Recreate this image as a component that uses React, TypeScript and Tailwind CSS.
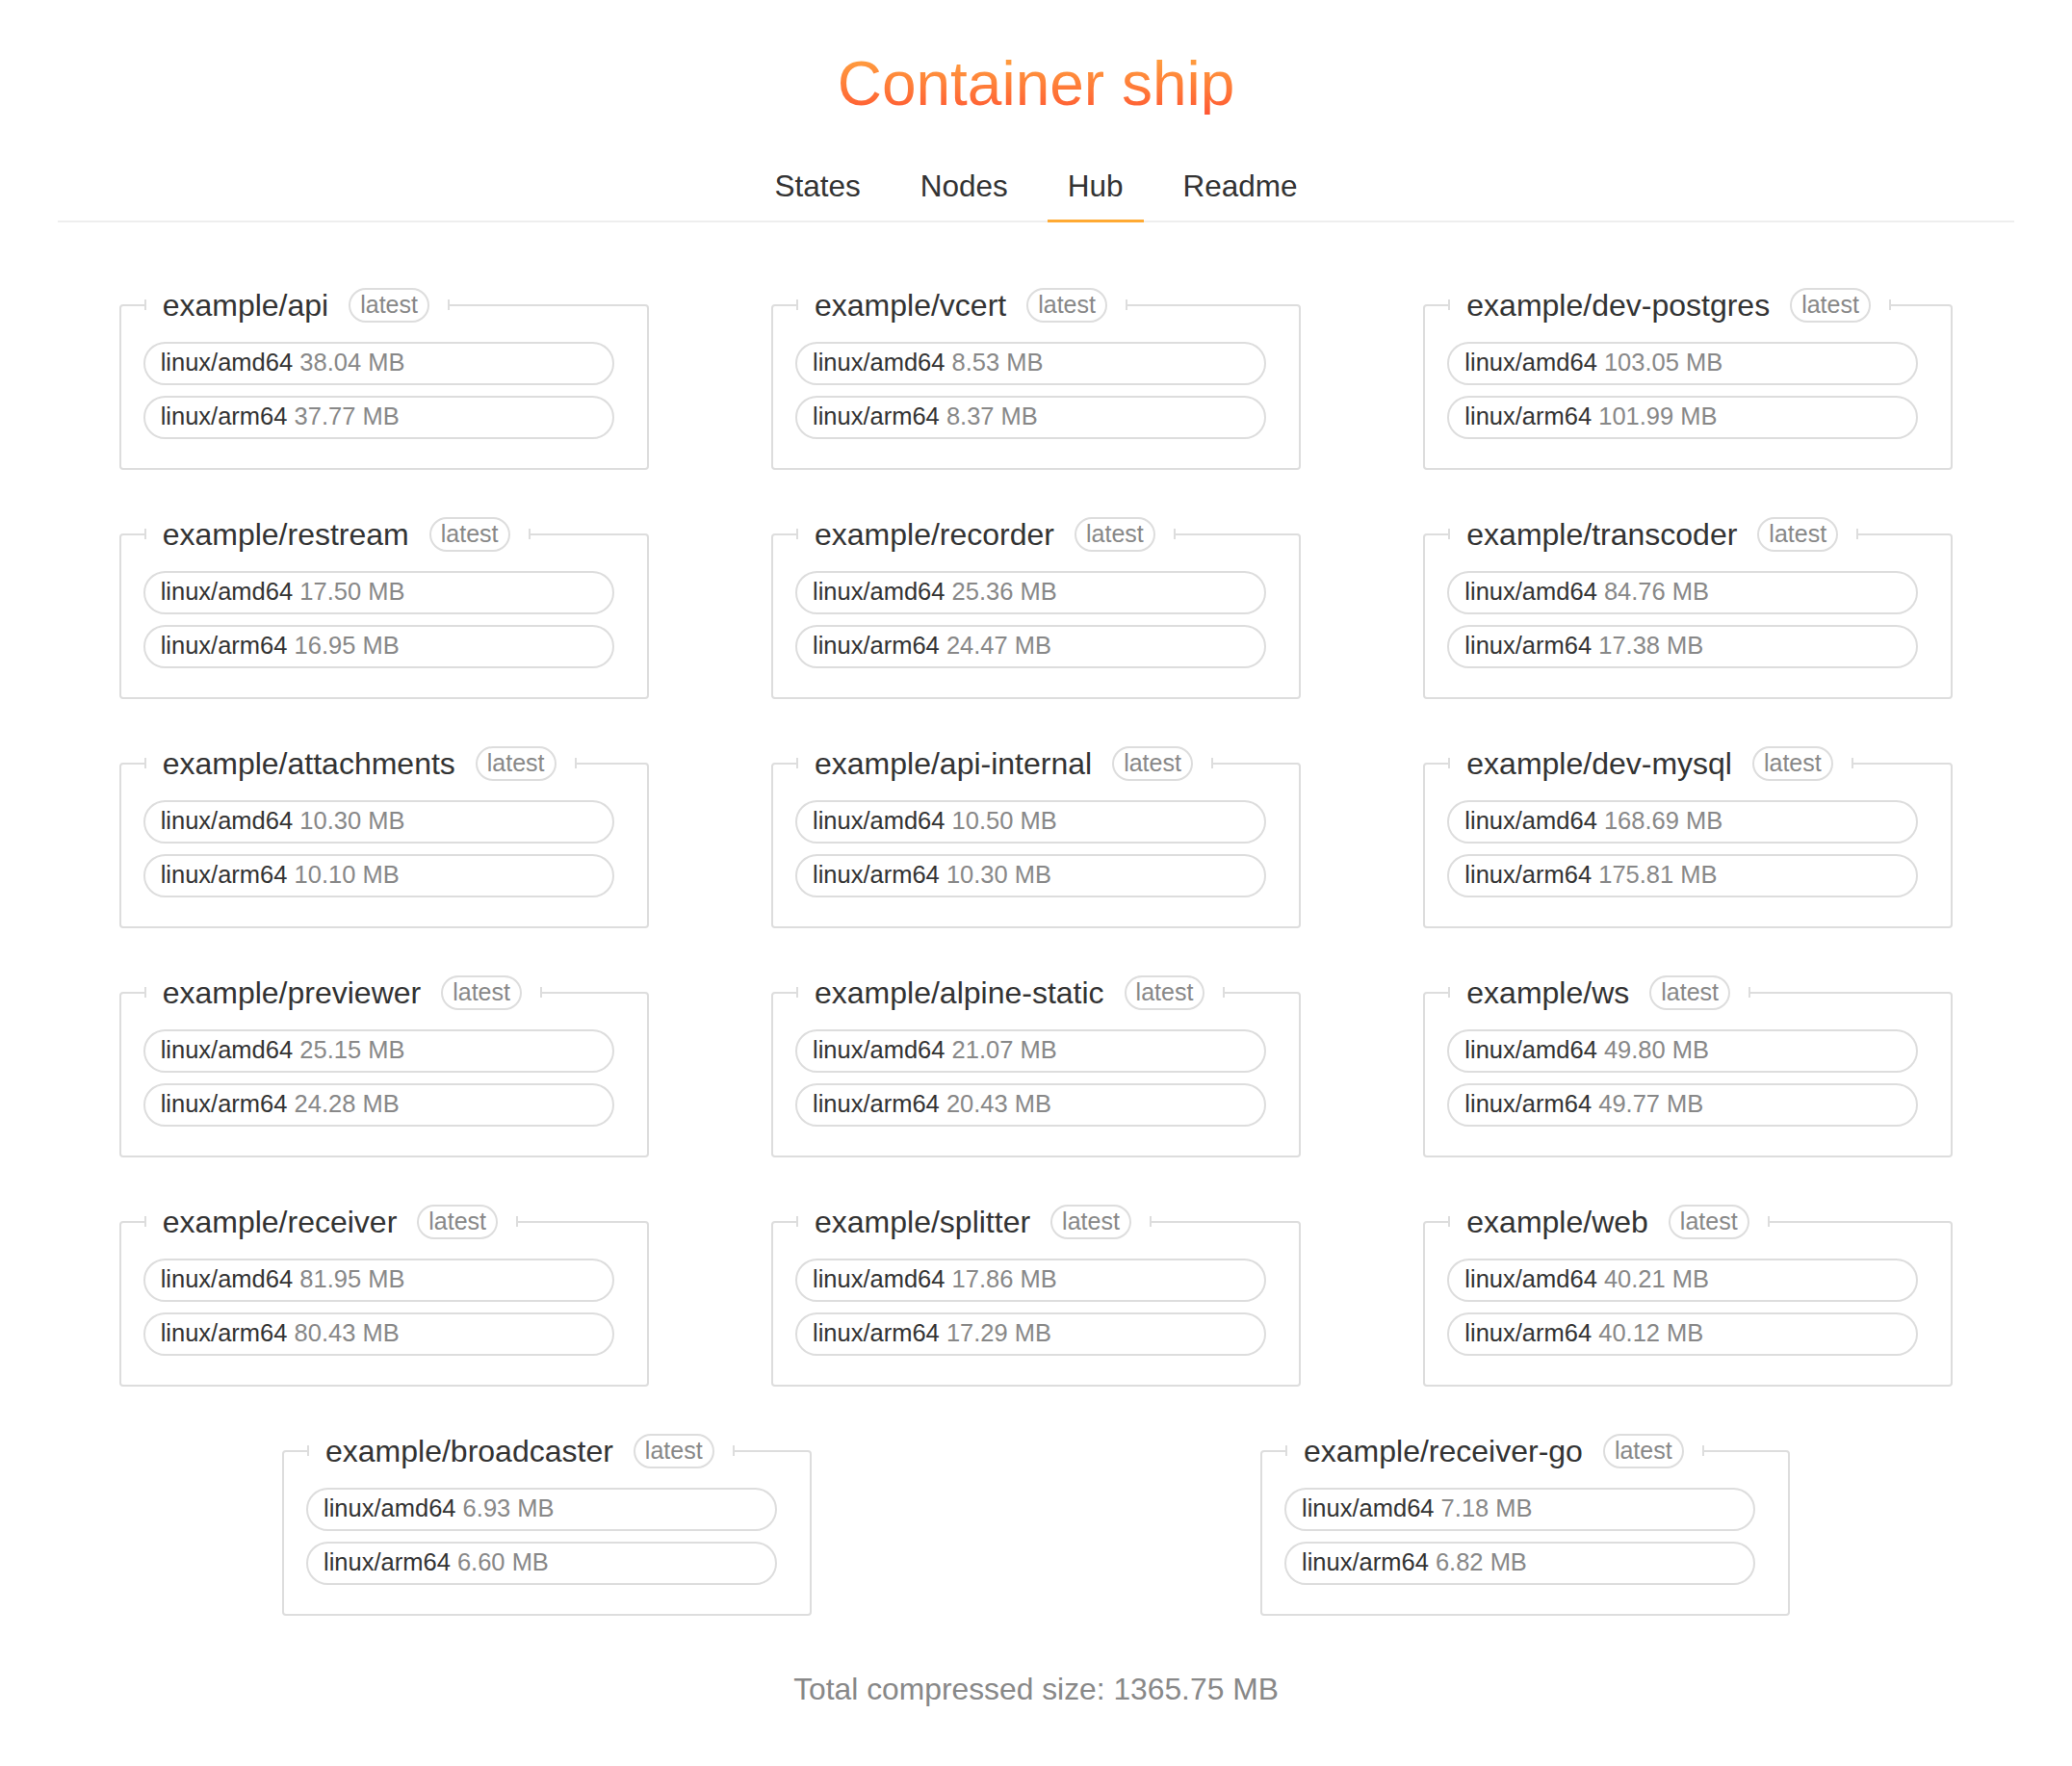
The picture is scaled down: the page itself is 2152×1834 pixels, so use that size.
type TImage = {
  name: string
  amd64: string
  arm64: string
}

const images: TImage[] = [
  { name: "example/api", amd64: "38.04", arm64: "37.77" },
  { name: "example/vcert", amd64: "8.53", arm64: "8.37" },
  { name: "example/dev-postgres", amd64: "103.05", arm64: "101.99" },
  { name: "example/restream", amd64: "17.50", arm64: "16.95" },
  { name: "example/recorder", amd64: "25.36", arm64: "24.47" },
  { name: "example/transcoder", amd64: "84.76", arm64: "17.38" },
  { name: "example/attachments", amd64: "10.30", arm64: "10.10" },
  { name: "example/api-internal", amd64: "10.50", arm64: "10.30" },
  { name: "example/dev-mysql", amd64: "168.69", arm64: "175.81" },
  { name: "example/previewer", amd64: "25.15", arm64: "24.28" },
  { name: "example/alpine-static", amd64: "21.07", arm64: "20.43" },
  { name: "example/ws", amd64: "49.80", arm64: "49.77" },
  { name: "example/receiver", amd64: "81.95", arm64: "80.43" },
  { name: "example/splitter", amd64: "17.86", arm64: "17.29" },
  { name: "example/web", amd64: "40.21", arm64: "40.12" },
  { name: "example/broadcaster", amd64: "6.93", arm64: "6.60" },
  { name: "example/receiver-go", amd64: "7.18", arm64: "6.82" },
]

const tabs = ["States", "Nodes", "Hub", "Readme"]

const Platform = ({ arch, size }: { arch: string; size: string }) => (
  <div className="h-[45px] flex items-center pl-[16px] border-2 border-[#dddddd] rounded-full text-[25.5px] leading-none">
    <span className="text-[#333333]">linux/{arch}</span>
    <span className="text-[#888888]">&nbsp;{size} MB</span>
  </div>
)

const ImageCard = ({ image }: { image: TImage }) => (
  <fieldset className="w-[550px] mb-[49px] pl-[23px] pr-[34px] pt-[20px] pb-[30px] border-2 border-[#dddddd] rounded-[4px]">
    <legend className="ml-px">
      <div className="flex items-center h-[36px]">
        <span className="w-[2px] h-[11px] bg-[#dddddd]" />
        <span className="ml-[17px] text-[32px] leading-none text-[#333333]">{image.name}</span>
        <span className="ml-[21px] h-[36px] flex items-center px-[10px] border-2 border-[#dddddd] rounded-full text-[25px] leading-none text-[#888888]">
          latest
        </span>
        <span className="ml-[19px] w-[2px] h-[11px] bg-[#dddddd]" />
      </div>
    </legend>
    <div className="flex flex-col gap-[11px]">
      <Platform arch="amd64" size={image.amd64} />
      <Platform arch="arm64" size={image.arm64} />
    </div>
  </fieldset>
)

const App = () => {
  return (
    <div className="bg-white font-['Liberation_Sans',Arial,sans-serif]">
      <header className="flex flex-col items-center pt-[55px]">
        <h1 className="text-[64px] leading-none font-normal bg-linear-to-b from-[#ffa440] to-[#ff5533] bg-clip-text text-transparent">
          Container ship
        </h1>
      </header>
      <nav className="mt-[59px] mx-[60px] flex justify-center gap-[20px] border-b-2 border-[#eeeeee]">
        {tabs.map((tab) => (
          <div
            key={tab}
            className={`px-[21px] pb-[18px] -mb-[2px] border-b-[3px] text-[31.5px] leading-none text-[#333333] ${
              tab === "Hub" ? "border-[#ffaa33]" : "border-transparent"
            }`}
          >
            {tab}
          </div>
        ))}
      </nav>
      <main className="mx-[60px] pt-[68px] flex flex-wrap justify-around">
        {images.map((image) => (
          <ImageCard key={image.name} image={image} />
        ))}
      </main>
      <footer className="pt-[12px] pb-[20px] text-center text-[31.8px] leading-none text-[#888888]">
        Total compressed size: 1365.75 MB
      </footer>
    </div>
  )
}

export default App
